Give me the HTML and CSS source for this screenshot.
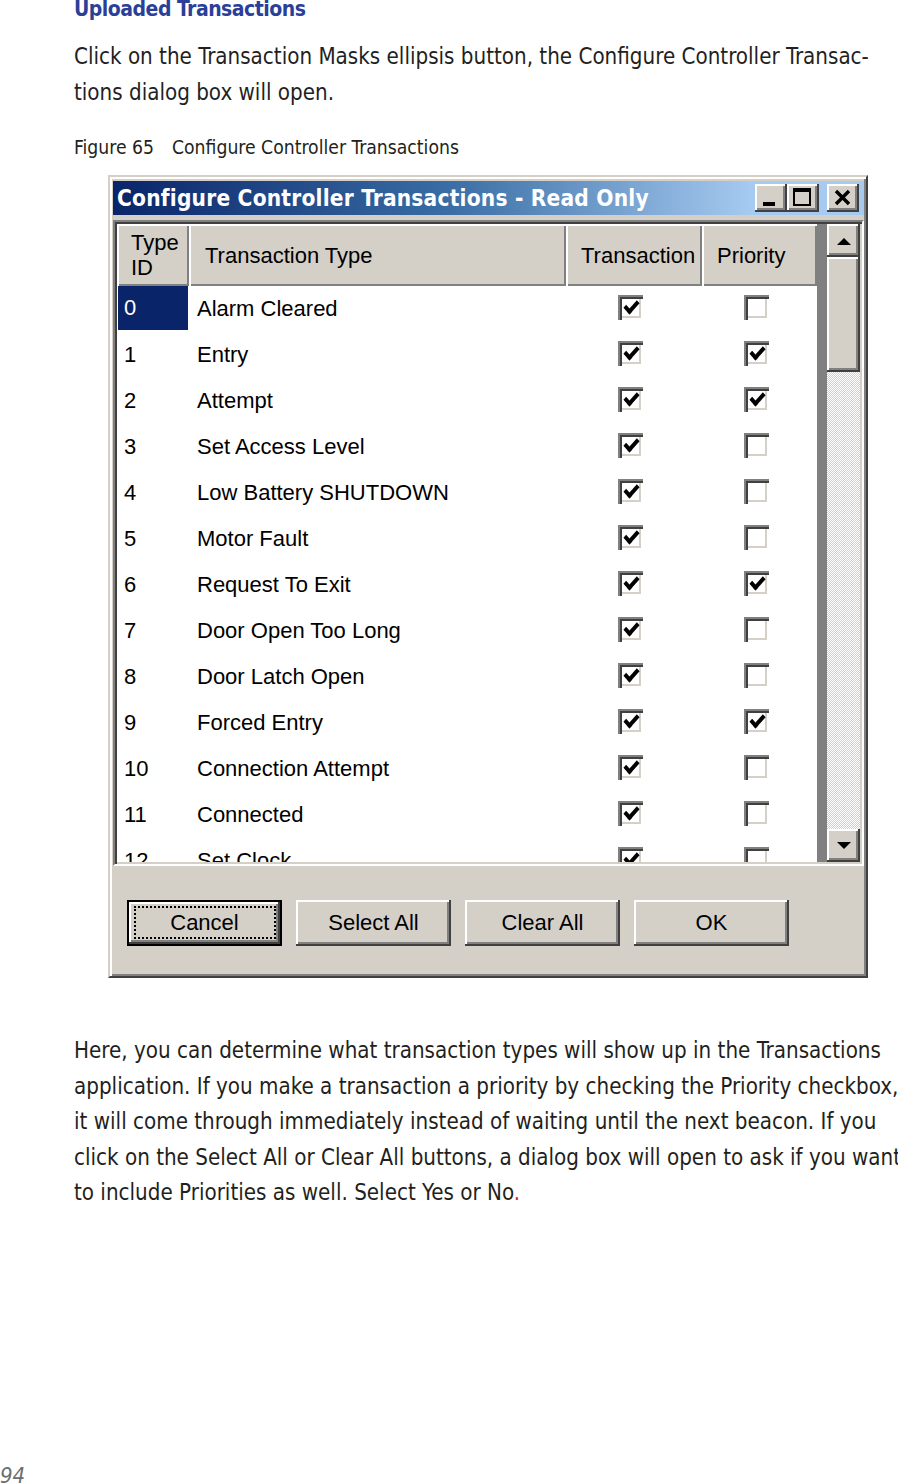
FILE: index.html
```html
<!DOCTYPE html>
<html>
<head>
<meta charset="utf-8">
<link rel="stylesheet" href="styles.css">
</head>
<body>
<div class="page">
  <div class="content">
    <h2 class="heading">Uploaded Transactions</h2>
    <p class="text p1">Click on the Transaction Masks ellipsis button, the Configure Controller Transac-<br>tions dialog box will open.</p>
    <p class="caption"><span class="fig">Figure 65</span><span>Configure Controller Transactions</span></p>
    <div class="window">
      <div class="titlebar">
        <span class="title">Configure Controller Transactions - Read Only</span>
        <div class="tbtns">
          <div class="tbtn"><svg viewBox="0 0 16 14" width="32" height="28"><rect x="4" y="9" width="6" height="2" fill="#000"/></svg></div>
          <div class="tbtn"><svg viewBox="0 0 16 14" width="32" height="28"><rect x="3" y="2" width="9" height="2" fill="#000"/><rect x="3" y="2" width="1" height="9" fill="#000"/><rect x="11" y="2" width="1" height="9" fill="#000"/><rect x="3" y="10" width="9" height="1" fill="#000"/></svg></div>
          <div class="tbtn close"><svg viewBox="0 0 16 14" width="32" height="28"><path d="M4.5 3.5 L11 10 M11 3.5 L4.5 10" stroke="#000" stroke-width="1.7" fill="none"/></svg></div>
        </div>
      </div>
      <div class="listframe">
        <div class="list">
          <div class="hdr">
            <div class="hcell c-id">Type<br>ID</div>
            <div class="hcell c-type">Transaction Type</div>
            <div class="hcell c-tr">Transaction</div>
            <div class="hcell c-pr">Priority</div>
          </div>
          <div class="rows">
            <div class="row"><div class="cell id sel">0</div><div class="cell">Alarm Cleared</div><div class="cell ck"><span class="cb on"></span></div><div class="cell ck"><span class="cb"></span></div></div>
            <div class="row"><div class="cell id">1</div><div class="cell">Entry</div><div class="cell ck"><span class="cb on"></span></div><div class="cell ck"><span class="cb on"></span></div></div>
            <div class="row"><div class="cell id">2</div><div class="cell">Attempt</div><div class="cell ck"><span class="cb on"></span></div><div class="cell ck"><span class="cb on"></span></div></div>
            <div class="row"><div class="cell id">3</div><div class="cell">Set Access Level</div><div class="cell ck"><span class="cb on"></span></div><div class="cell ck"><span class="cb"></span></div></div>
            <div class="row"><div class="cell id">4</div><div class="cell">Low Battery SHUTDOWN</div><div class="cell ck"><span class="cb on"></span></div><div class="cell ck"><span class="cb"></span></div></div>
            <div class="row"><div class="cell id">5</div><div class="cell">Motor Fault</div><div class="cell ck"><span class="cb on"></span></div><div class="cell ck"><span class="cb"></span></div></div>
            <div class="row"><div class="cell id">6</div><div class="cell">Request To Exit</div><div class="cell ck"><span class="cb on"></span></div><div class="cell ck"><span class="cb on"></span></div></div>
            <div class="row"><div class="cell id">7</div><div class="cell">Door Open Too Long</div><div class="cell ck"><span class="cb on"></span></div><div class="cell ck"><span class="cb"></span></div></div>
            <div class="row"><div class="cell id">8</div><div class="cell">Door Latch Open</div><div class="cell ck"><span class="cb on"></span></div><div class="cell ck"><span class="cb"></span></div></div>
            <div class="row"><div class="cell id">9</div><div class="cell">Forced Entry</div><div class="cell ck"><span class="cb on"></span></div><div class="cell ck"><span class="cb on"></span></div></div>
            <div class="row"><div class="cell id">10</div><div class="cell">Connection Attempt</div><div class="cell ck"><span class="cb on"></span></div><div class="cell ck"><span class="cb"></span></div></div>
            <div class="row"><div class="cell id">11</div><div class="cell">Connected</div><div class="cell ck"><span class="cb on"></span></div><div class="cell ck"><span class="cb"></span></div></div>
            <div class="row"><div class="cell id">12</div><div class="cell">Set Clock</div><div class="cell ck"><span class="cb on"></span></div><div class="cell ck"><span class="cb"></span></div></div>
          </div>
        </div>
        <div class="gutter"></div>
        <div class="scrollbar">
          <div class="sbtn"><svg viewBox="0 0 14 8" width="14" height="8"><path d="M0 8 L7 1 L14 8 Z" fill="#000"/></svg></div>
          <div class="thumb"></div>
          <div class="track"></div>
          <div class="sbtn"><svg viewBox="0 0 14 8" width="14" height="8"><path d="M0 0 L7 7 L14 0 Z" fill="#000"/></svg></div>
        </div>
      </div>
      <div class="btnrow">
        <div class="btn default"><span class="focus">Cancel</span></div>
        <div class="btn">Select All</div>
        <div class="btn">Clear All</div>
        <div class="btn">OK</div>
      </div>
    </div>
    <p class="text p2">Here, you can determine what transaction types will show up in the Transactions<br>application. If you make a transaction a priority by checking the Priority checkbox,<br>it will come through immediately instead of waiting until the next beacon. If you<br>click on the Select All or Clear All buttons, a dialog box will open to ask if you want<br>to include Priorities as well. Select Yes or No<span class="red">.</span></p>
  </div>
  <div class="folio">94</div>
</div>
</body>
</html>
```

FILE: styles.css
```css
html, body {
  margin: 0;
  padding: 0;
  background: #fff;
}
.page {
  width: 898px;
  min-height: 1484px;
  display: flex;
  flex-direction: column;
  overflow: hidden;
  font-family: "DejaVu Sans Condensed", "DejaVu Sans", sans-serif;
  font-stretch: condensed;
  color: #231f20;
}
.content {
  padding-left: 74px;
}
.heading {
  margin: -3px 0 0 0;
  font-size: 21px;
  line-height: 25px;
  font-weight: bold;
  letter-spacing: -0.5px;
  color: #2b3f98;
}
.text {
  margin: 0;
  font-size: 22.2px;
  line-height: 35.5px;
  white-space: nowrap;
}
.p1 {
  margin-top: 17px;
}
.caption {
  margin: 26px 0 0 0;
  font-size: 19.2px;
  line-height: 24px;
  white-space: nowrap;
}
.caption .fig {
  display: inline-block;
  width: 98px;
}
.red { color: #e0262a; }

/* window */
.window {
  margin: 15px 0 0 34px;
  width: 760px;
  box-sizing: border-box;
  background: #d4d0c8;
  border: 2px solid;
  border-color: #d4d0c8 #404040 #404040 #d4d0c8;
  box-shadow: inset 2px 2px #fff, inset -2px -2px #808080;
  padding: 4px 2px 30px 3px;
  font-family: "Liberation Sans", Arial, sans-serif;
  font-stretch: normal;
  color: #000;
}
.titlebar {
  height: 34px;
  display: flex;
  align-items: center;
  justify-content: space-between;
  padding: 0 5px 0 4px;
  background: linear-gradient(to right, #0a246a 0%, #3a6ea5 45%, #a6caf0 85%, #a6caf0 100%);
}
.title {
  color: #fff;
  font-family: "DejaVu Sans Condensed", "DejaVu Sans", sans-serif;
  font-stretch: condensed;
  font-weight: bold;
  font-size: 22.5px;
  letter-spacing: 0.2px;
  white-space: nowrap;
}
.tbtns {
  display: flex;
  align-items: center;
}
.tbtn {
  width: 32px;
  height: 28px;
  background: #d4d0c8;
  box-shadow: inset -2px -2px #404040, inset 2px 2px #fff, inset -4px -4px #808080;
}
.tbtn svg { display: block; }
.tbtn.close { margin-left: 8px; }

.listframe {
  margin-top: 5px;
  height: 646px;
  box-sizing: border-box;
  border: 2px solid;
  border-color: #808080 #fff #fff #808080;
  box-shadow: inset 2px 2px #404040, inset -2px -2px #d4d0c8;
  padding: 2px;
  display: flex;
  background: #fff;
}
.list {
  width: 700px;
  overflow: hidden;
  display: flex;
  flex-direction: column;
}
.hdr {
  display: grid;
  grid-template-columns: 72px 377px 136px 115px;
  height: 62px;
  flex: none;
  background: #d4d0c8;
}
.hcell {
  box-sizing: border-box;
  padding-left: 15px;
  font-size: 22px;
  line-height: 25px;
  display: flex;
  align-items: center;
  box-shadow: inset 2px 2px #fff, inset -2px -2px #808080;
  white-space: nowrap;
}
.hcell.c-id { padding-left: 14px; }
.hcell.c-type { padding-left: 16px; }
.rows {
  flex: 1;
  overflow: hidden;
}
.row {
  display: grid;
  grid-template-columns: 72px 377px 136px 115px;
  height: 46px;
  align-items: center;
  font-size: 22px;
  white-space: nowrap;
}
.cell {
  padding-left: 8px;
  height: 46px;
  line-height: 46px;
  box-sizing: border-box;
}
.cell.id { padding-left: 7px; }
.cell.sel {
  background: #0a246a;
  color: #fff;
  margin: 0 1px 2px 1px;
  height: 44px;
  line-height: 44px;
  padding-left: 6px;
}
.cell.ck {
  padding-left: 0;
  display: flex;
  align-items: center;
  justify-content: center;
}
.cb {
  display: block;
  width: 25px;
  height: 25px;
  margin: -4px 7px 0 0;
  background: #fff;
  box-shadow: inset 2px 2px #808080, inset 4px 4px #404040, inset -2px -2px #fff, inset -4px -4px #d4d0c8;
  position: relative;
}
.cb.on::after {
  content: "";
  position: absolute;
  left: 6px;
  top: 6px;
  width: 11px;
  height: 5px;
  border-left: 4px solid #000;
  border-bottom: 4px solid #000;
  transform: rotate(-48deg) skewX(-6deg);
  transform-origin: 50% 50%;
}
.gutter {
  width: 10px;
  background: #808080;
}
.scrollbar {
  width: 33px;
  display: flex;
  flex-direction: column;
}
.sbtn {
  height: 33px;
  flex: none;
  background: #d4d0c8;
  box-shadow: inset -2px -2px #404040, inset 2px 2px #fff, inset -4px -4px #808080;
  display: flex;
  align-items: center;
  justify-content: center;
}
.sbtn svg { display: block; }
.thumb {
  height: 115px;
  flex: none;
  background: #d4d0c8;
  box-shadow: inset -2px -2px #404040, inset 2px 2px #fff, inset -4px -4px #808080;
}
.track {
  flex: 1;
  background: repeating-conic-gradient(#fff 0 25%, #d4d0c8 0 50%) 0 0 / 2px 2px;
}

.btnrow {
  display: flex;
  gap: 14px;
  margin: 34px 0 0 14px;
}
.btn {
  width: 155px;
  height: 46px;
  box-sizing: border-box;
  display: flex;
  align-items: center;
  justify-content: center;
  font-size: 22px;
  background: #d4d0c8;
  box-shadow: inset -2px -2px #404040, inset 2px 2px #fff, inset -4px -4px #808080;
}
.btn.default {
  box-shadow: inset 0 0 0 2px #000, inset -4px -4px #404040, inset 4px 4px #fff, inset -6px -6px #808080;
}
.btn .focus {
  display: flex;
  align-items: center;
  justify-content: center;
  width: 138px;
  height: 29px;
  margin-top: -1px;
  border: 2px dotted #000;
}

.p2 {
  margin-top: 55px;
}
.folio {
  margin-top: auto;
  font-size: 22px;
  line-height: 24px;
  font-style: italic;
  color: #6d6e70;
  margin-bottom: -4px;
}
```
